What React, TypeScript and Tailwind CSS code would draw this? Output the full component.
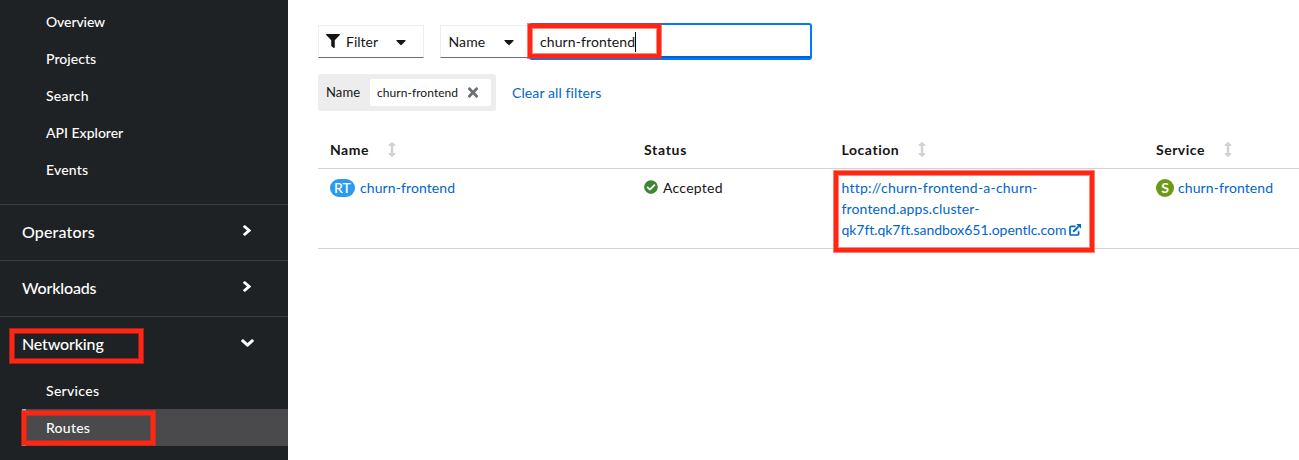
import type { ReactNode } from 'react';
import {
  FaAngleDown,
  FaAngleRight,
  FaArrowsAltV,
  FaCaretDown,
  FaCheckCircle,
  FaFilter,
  FaTimes,
} from 'react-icons/fa';

function Highlight({ className }: { className: string }) {
  return (
    <div
      className={`pointer-events-none absolute z-10 border border-[#ff2614]/60 shadow-[inset_0_0_0_4px_#ff2614,inset_0_0_0_5px_#ff261488] ${className}`}
    />
  );
}

function ExternalLinkIcon() {
  return (
    <svg viewBox="0 0 12 12" className="size-3" fill="none" stroke="currentColor">
      <path d="M6.5 2.4H2.1a1.1 1.1 0 0 0-1.1 1.1v6.4a1.1 1.1 0 0 0 1.1 1.1h6.4a1.1 1.1 0 0 0 1.1-1.1V7.2" strokeWidth="1.7" />
      <path d="M4.2 7.8 9.6 2.4" strokeWidth="2" />
      <path d="M7.2 0H12v4.8Z" fill="currentColor" stroke="none" />
    </svg>
  );
}

function SubItem({ children }: { children: ReactNode }) {
  return <li className="flex h-[37px] items-center pl-[46px] text-[14px]">{children}</li>;
}

function Section({ label, tracking }: { label: string; tracking: string }) {
  return (
    <div className="flex h-14 items-center justify-between border-t border-[#3c3f42] pr-9 pb-[2px] pl-[22px] text-[16px]">
      <span className={tracking}>{label}</span>
      <FaAngleRight className="mb-[2px] h-[17px] w-[10px]" preserveAspectRatio="none" />
    </div>
  );
}

function Sidebar() {
  return (
    <nav className="h-[460px] w-72 shrink-0 bg-[#1f2224] pt-[3px] font-medium text-white">
      <ul className="pb-4">
        <SubItem><span className="-tracking-[0.1px]">Overview</span></SubItem>
        <SubItem><span className="tracking-[0.05px]">Projects</span></SubItem>
        <SubItem><span className="tracking-[0.25px]">Search</span></SubItem>
        <SubItem><span>API Explorer</span></SubItem>
        <SubItem><span className="tracking-[0.2px]">Events</span></SubItem>
      </ul>
      <Section label="Operators" tracking="tracking-[0.15px]" />
      <Section label="Workloads" tracking="-tracking-[0.15px]" />
      <div className="relative flex h-14 items-center justify-between border-t border-[#3c3f42] pr-[34px] pb-[2px] pl-[22px] text-[16px]">
        <span className="-tracking-[0.15px]">Networking</span>
        <FaAngleDown className="mb-px h-[18px] w-[13px]" preserveAspectRatio="none" />
        <Highlight className="top-[11px] left-[9px] h-9 w-[135px]" />
      </div>
      <ul>
        <SubItem><span className="tracking-[0.3px]">Services</span></SubItem>
        <li className="relative ml-[22px] flex h-[37px] items-center border-l-4 border-[#73bcf7] bg-[#4a4a4d] pl-5 text-[14px]">
          <span className="tracking-[0.25px]">Routes</span>
          <Highlight className="top-px -left-[5px] h-9 w-[135px]" />
        </li>
      </ul>
    </nav>
  );
}

function Toolbar() {
  return (
    <div className="flex h-[33px] text-[14px]">
      <button className="mr-4 flex w-[106px] items-center border border-[#ededed] border-b-[#6a6e73] pl-[7px]">
        <FaFilter className="mb-px h-[14px] w-[14px]" />
        <span className="ml-[6px] w-[50px] text-left">Filter</span>
        <FaCaretDown className="h-4 w-[10px]" />
      </button>
      <button className="flex w-[89px] items-center border border-[#ededed] border-b-[#6a6e73] pl-[7.5px]">
        <span className="w-[55.5px] text-left tracking-[0.1px]">Name</span>
        <FaCaretDown className="h-4 w-[10px]" />
      </button>
      <div className="relative -mt-[2px] flex h-[37px] w-[283px] items-center rounded-[3px] border-2 border-[#0078ff] pl-[9px]">
        <div className="absolute inset-x-0 bottom-0 h-[2px] bg-[#0060cc]" />
        <span className="tracking-[0.1px]">churn-frontend</span>
        <span className="h-5 w-px bg-black" />
        <Highlight className="-top-[2px] -left-[4px] h-9 w-[135px]" />
      </div>
    </div>
  );
}

function Chips() {
  return (
    <div className="mt-4 flex items-center">
      <div className="flex h-[37px] w-[178px] items-center rounded-[3px] bg-[#ededed] pl-2 text-[13px]">
        <span className="w-11 tracking-[0.1px]">Name</span>
        <div className="flex h-[27px] w-[121px] items-center rounded-[2px] bg-white pl-[7px] text-[12px]">
          <span className="w-[90px] tracking-[0.05px]">churn-frontend</span>
          <FaTimes className="mb-px h-[15px] w-[12px] text-[#6a6e73]" />
        </div>
      </div>
      <a className="ml-4 text-[14px] tracking-[0.1px] text-[#0066cc]">Clear all filters</a>
    </div>
  );
}

function SortIcon() {
  return <FaArrowsAltV className="mb-px h-[15px] w-2 text-[#d2d2d2]" preserveAspectRatio="none" />;
}

function RoutesTable() {
  return (
    <div className="mt-[21px] text-[14px]">
      <div className="grid h-[37px] grid-cols-[314px_198px_314px_1fr] border-b border-[#d2d2d2] pb-px font-bold">
        <div className="flex items-center pl-3">
          <span className="w-[58px] tracking-[0.5px]">Name</span>
          <SortIcon />
        </div>
        <div className="flex items-center pl-3"><span className="tracking-[0.7px]">Status</span></div>
        <div className="flex items-center pl-3">
          <span className="-ml-[0.5px] w-[76.5px] tracking-[0.55px]">Location</span>
          <SortIcon />
        </div>
        <div className="flex items-center pl-3">
          <span className="w-[68px] tracking-[0.5px]">Service</span>
          <SortIcon />
        </div>
      </div>
      <div className="grid h-20 grid-cols-[314px_198px_314px_1fr] border-b border-[#d2d2d2] pt-2 leading-[21px]">
        <div className="flex h-[21px] items-center pl-3">
          <span className="mr-[5px] flex h-[18px] w-[25px] items-center justify-center rounded-full bg-[#2b9af3] font-medium text-white">RT</span>
          <a className="tracking-[0.1px] text-[#0066cc]">churn-frontend</a>
        </div>
        <div className="flex h-[21px] items-center pl-3">
          <FaCheckCircle className="relative -top-px mr-[5px] size-[14px] text-[#3e8635]" />
          <span className="tracking-[0.25px]">Accepted</span>
        </div>
        <div className="relative pl-[11.5px] text-[#0066cc]">
          <div className="tracking-[0.22px]">http://churn-frontend-a-churn-</div>
          <div className="tracking-[0.14px]">frontend.apps.cluster-</div>
          <div className="flex items-center">
            <span className="w-[227.5px] -tracking-[0.05px]">qk7ft.qk7ft.sandbox651.opentlc.com</span>
            <ExternalLinkIcon />
          </div>
          <Highlight className="-top-[7px] left-[3px] h-[83px] w-[262px]" />
        </div>
        <div className="flex h-[21px] items-center pl-3">
          <span className="mr-1 flex size-[18px] items-center justify-center rounded-full bg-[#6a9a14] font-bold text-white">S</span>
          <a className="tracking-[0.1px] text-[#0066cc]">churn-frontend</a>
        </div>
      </div>
    </div>
  );
}

export default function App() {
  return (
    <div className="flex h-[460px] w-[1299px] overflow-hidden bg-white font-['Lato',sans-serif] whitespace-nowrap text-[#151515]">
      <Sidebar />
      <main className="min-w-0 flex-1 pt-[25px] pl-[30px]">
        <Toolbar />
        <Chips />
        <RoutesTable />
      </main>
    </div>
  );
}
